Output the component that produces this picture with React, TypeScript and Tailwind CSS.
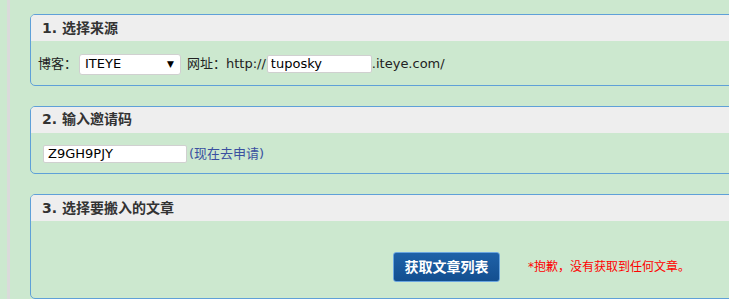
import { useState } from 'react';

const font = { fontFamily: '"DejaVu Sans", Verdana, "Noto Sans CJK SC", sans-serif' };

function Panel({ title, bodyClass, children }: { title: string; bodyClass: string; children?: React.ReactNode }) {
  return (
    <div className="w-[760px] border border-[#5fa0d8] rounded-[5px] overflow-hidden">
      <div className="h-[26px] bg-[#eeeeee] flex items-center pl-[11px] text-[14px] font-bold text-[#333333]">
        {title}
      </div>
      <div className={bodyClass}>{children}</div>
    </div>
  );
}

export default function App() {
  const [blog, setBlog] = useState('ITEYE');
  const [user, setUser] = useState('tuposky');
  const [code, setCode] = useState('Z9GH9PJY');

  return (
    <div className="w-[729px] h-[299px] overflow-hidden bg-[#cce8cf] flex text-[13px] text-[#222222]" style={font}>
      <div className="ml-[7px] w-[3px] h-full bg-[#dadada] shrink-0" />
      <div className="ml-[20px] pt-[14px] flex flex-col gap-[20px]">
        <Panel title="1. 选择来源" bodyClass="h-[46px] flex items-center pl-[7px]">
          <span>博客：</span>
          <div className="relative ml-[2px] w-[102px] h-[21px] bg-white border border-[#d0d0d0] rounded-[3px] flex items-center pl-[5px]">
            <select
              value={blog}
              onChange={(e) => setBlog(e.target.value)}
              className="appearance-none bg-transparent outline-none w-full text-[13px] text-black"
            >
              <option>ITEYE</option>
              <option>CSDN</option>
            </select>
            <span className="absolute right-[6px] top-[3px] text-[9px] text-black pointer-events-none">▼</span>
          </div>
          <span className="ml-[6px]">网址：http://</span>
          <input
            value={user}
            onChange={(e) => setUser(e.target.value)}
            className="ml-[1px] w-[105px] h-[18px] bg-white border border-[#d0d0d0] rounded-[2px] px-[3px] text-[13px] text-black outline-none"
          />
          <span>.iteye.com/</span>
        </Panel>
        <Panel title="2. 输入邀请码" bodyClass="h-[43px] flex items-center pl-[12px]">
          <input
            value={code}
            onChange={(e) => setCode(e.target.value)}
            className="w-[144px] h-[18px] bg-white border border-[#d0d0d0] rounded-[2px] px-[4px] text-[13px] text-black outline-none"
          />
          <a href="#" className="ml-[2px] text-[#3a50a0]">(现在去申请)</a>
        </Panel>
        <Panel title="3. 选择要搬入的文章" bodyClass="h-[80px] flex items-start pt-[31px] pl-[362px]">
          <button className="w-[107px] h-[30px] rounded-[3px] border border-[#6aa6e0] bg-gradient-to-b from-[#1f62a8] to-[#134f90] text-white font-bold text-[14px]">
            获取文章列表
          </button>
          <span className="ml-[28px] mt-[6px] text-[12px] text-[#ff0000]">*抱歉，没有获取到任何文章。</span>
        </Panel>
      </div>
    </div>
  );
}
